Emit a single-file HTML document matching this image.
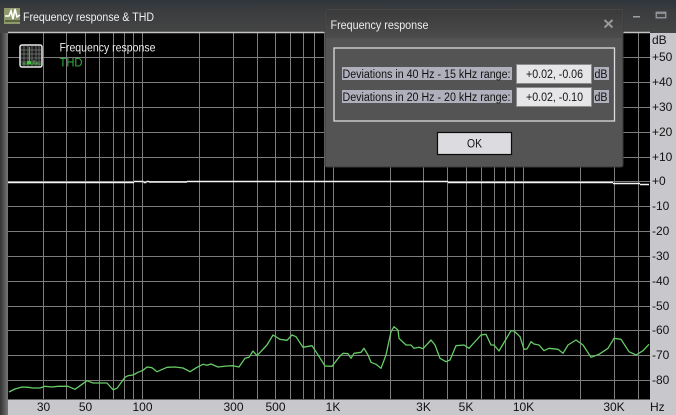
<!DOCTYPE html>
<html><head><meta charset="utf-8"><style>
html,body{margin:0;padding:0;background:#000;width:676px;height:415px;overflow:hidden}
svg{display:block}
text{font-family:"Liberation Sans",sans-serif}
</style></head><body>
<svg xmlns="http://www.w3.org/2000/svg" width="676" height="415" viewBox="0 0 676 415">
<defs>
<linearGradient id="tb" x1="0" y1="0" x2="0" y2="1"><stop offset="0" stop-color="#2f353c"/><stop offset=".3" stop-color="#3a3c3e"/><stop offset="1" stop-color="#454545"/></linearGradient>
<linearGradient id="lb" x1="0" y1="0" x2="1" y2="0"><stop offset="0" stop-color="#333"/><stop offset=".6" stop-color="#5a5a5a"/><stop offset="1" stop-color="#777"/></linearGradient>
<linearGradient id="dt" x1="0" y1="0" x2="0" y2="1"><stop offset="0" stop-color="#3a3a3a"/><stop offset="1" stop-color="#4c4c4c"/></linearGradient>
</defs>
<rect width="676" height="33" fill="url(#tb)"/>
<rect y="33" width="8" height="382" fill="url(#lb)"/>
<rect x="8" y="399" width="668" height="16" fill="#c8c8cc"/>
<rect x="650" y="33" width="26" height="382" fill="#c8c8cc"/>
<rect x="8" y="33" width="642" height="366.500" fill="#000"/>

<g stroke="#7c7c7c" stroke-width="1">
<path d="M43.500 33V399M66.500 33V399M85.500 33V399M99.500 33V399M113.500 33V399M124.500 33V399M133.500 33V399M142.500 33V399M199.500 33V399M233.500 33V399M257.500 33V399M275.500 33V399M290.500 33V399M303.500 33V399M314.500 33V399M324.500 33V399M333.500 33V399M390.500 33V399M423.500 33V399M447.500 33V399M466.500 33V399M481.500 33V399M494.500 33V399M505.500 33V399M514.500 33V399M523.500 33V399M580.500 33V399M614.500 33V399M638.500 33V399"/>
<path d="M8 57.500H650M8 82.500H650M8 107.500H650M8 132.500H650M8 157.500H650M8 181.500H650M8 206.500H650M8 231.500H650M8 256.500H650M8 281.500H650M8 306.500H650M8 330.500H650M8 355.500H650M8 380.500H650"/>
</g>
<path d="M8 32.500H650" stroke="#c4c4c4" stroke-width="1.500"/>
<path d="M8 182.500H134M134 181.500H143.500M143.500 182.500H146.500M146.500 181.500H149M149 182H187M187 181.500H400M400 181.500H448M448 182.500H613M613 183.500H640M640 184.500H649" stroke="#f4f4f4" stroke-width="1.400" fill="none"/>

<polyline fill="none" stroke="#66cc66" stroke-width="1.300" stroke-linejoin="round" points="9,392 15,389 22,387 28,387.300 33,388 40,388 45,386.300 52,387 58,386.300 68,386.300 75,389.300 82,384.300 87,380.700 93,383 107,383 113,389.700 117,388.300 125,377.300 128,375.700 133,375 138,372.300 143,370.300 147,367 152,367.700 157,371.700 167,367.300 175,367 183,368 190,371.700 197,367.300 203,364.300 207,365.300 211,364 218,367 227,366 233,365.700 239,367 245,358.300 249,357.300 253,351 257,355.700 267,345 273,335 280,339.300 287,340.300 292,335 296,336.700 303,347.300 312,345.700 317,353.300 325,366 332,366.300 340,356 343,353.300 348,353.700 351,358.300 354,353.300 361,352.300 364,348.300 368,355 371,362.300 376,364.300 381,368.300 386,355 391,331.700 394,326.700 398,330 399,338.300 406,345 411,345 414,348.300 419,347.300 423,348.700 431,340 435,345 440,358.300 446,361.700 450,360 456,345.700 464,345 469,348.300 481,335 486,334.300 491,345 494,345 499,351 511,330.700 514,331 520,336.700 524,349.300 527,349 531,341.700 534,344 539,345 544,350.700 549,348.300 558,349.300 563,353.300 568,345 576,340 583,345 591,357.300 599,354.300 608,348.300 614,338.300 621,339.300 629,351.700 636,355 643,350.700 649,344.300"/>

<!-- title bar -->
<rect x="4" y="8" width="16" height="16" fill="#8f9a6c"/>
<path d="M5 16H9L11 11L13 19L15 9L17 17L20 15" stroke="#fff" stroke-width="1.600" fill="none"/>
<path d="M5 21H20" stroke="#5c6440" stroke-width="2"/>
<text x="23" y="21" font-size="11.500" fill="#f0f0f0" textLength="131" lengthAdjust="spacingAndGlyphs">Frequency response &amp; THD</text>
<rect x="633" y="16" width="7" height="1.500" fill="#a0a0a0"/>
<rect x="656" y="12" width="10" height="6" fill="#8a8a90" stroke="#99a" stroke-width="0.800"/>
<rect x="657" y="14" width="8" height="3" fill="#444"/>

<!-- legend icon -->
<rect x="20" y="45" width="22" height="22" rx="2" fill="#1c1c1c" stroke="#e8e8e8" stroke-width="1.500"/>
<path d="M24 46V66M28 46V66M32 46V66M36 46V66M39 46V66M21 50H41M21 54H41M21 58H41M21 62H41" stroke="#777" stroke-width=".8"/>
<path d="M29.500 47V64M22 64H41M24 62V64M34 60V64M37 62V64" stroke="#44b044" stroke-width="1.100"/>
<rect x="27" y="61" width="4" height="3" fill="#45c045"/>
<text x="59.500" y="51.500" font-size="11.500" fill="#eee" textLength="96" lengthAdjust="spacingAndGlyphs">Frequency response</text>
<text x="59.500" y="66.500" font-size="11.500" fill="#35b043" textLength="23" lengthAdjust="spacingAndGlyphs">THD</text>

<!-- y axis -->
<g font-size="12" fill="#111">
<text x="652" y="44">dB</text>
<text x="652" y="61">+50</text><text x="652" y="86">+40</text><text x="652" y="111">+30</text><text x="652" y="136">+20</text><text x="652" y="161">+10</text><text x="652" y="185">+0</text>
<text x="652" y="210">-10</text><text x="652" y="235">-20</text><text x="652" y="260">-30</text><text x="652" y="285">-40</text><text x="652" y="310">-50</text><text x="652" y="334">-60</text><text x="652" y="359">-70</text><text x="652" y="384">-80</text>
</g>
<!-- x axis -->
<g font-size="12" fill="#111" text-anchor="middle">
<text x="43.500" y="411">30</text><text x="85.500" y="411">50</text><text x="142.500" y="411">100</text><text x="233.500" y="411">300</text><text x="275.500" y="411">500</text><text x="333" y="411">1K</text><text x="423.500" y="411">3K</text><text x="466" y="411">5K</text><text x="523.500" y="411">10K</text><text x="614" y="411">30K</text>
</g>
<text x="650" y="411" font-size="12" fill="#111">Hz</text>

<!-- dialog -->
<rect x="325" y="9" width="298" height="158" rx="2" fill="#545454" stroke="#3a3a3a"/>
<rect x="326" y="10" width="296" height="28" fill="url(#dt)"/>
<text x="330.500" y="29" font-size="11.500" fill="#eee" textLength="98" lengthAdjust="spacingAndGlyphs">Frequency response</text>
<path d="M604.500 20L612.500 27.500M612.500 20L604.500 27.500" stroke="#999" stroke-width="2"/>
<rect x="334" y="48" width="280.500" height="73" fill="none" stroke="#dcdcdc" stroke-width="1.300"/>
<rect x="342" y="67" width="170" height="13" fill="#b0b0bc"/>
<rect x="342" y="90" width="170" height="13" fill="#b0b0bc"/>
<rect x="594" y="67" width="15" height="13" fill="#b0b0bc"/>
<rect x="594" y="90" width="15" height="13" fill="#b0b0bc"/>
<rect x="516.500" y="64.500" width="75" height="19" fill="#e6e6e8" stroke="#8c8c8c"/>
<rect x="516.500" y="87.500" width="75" height="19" fill="#e6e6e8" stroke="#8c8c8c"/>
<g font-size="11.500" fill="#111">
<text x="342.500" y="78" textLength="168" lengthAdjust="spacingAndGlyphs">Deviations in 40 Hz - 15 kHz range:</text>
<text x="342.500" y="101" textLength="168" lengthAdjust="spacingAndGlyphs">Deviations in 20 Hz - 20 kHz range:</text>
<text x="594.500" y="78" textLength="13" lengthAdjust="spacingAndGlyphs">dB</text>
<text x="594.500" y="101" textLength="13" lengthAdjust="spacingAndGlyphs">dB</text>
<text x="526" y="78" textLength="57" lengthAdjust="spacingAndGlyphs">+0.02, -0.06</text>
<text x="526" y="101" textLength="57" lengthAdjust="spacingAndGlyphs">+0.02, -0.10</text>
</g>
<rect x="437.500" y="132.500" width="74" height="22" fill="#dcdce0" stroke="#0a0a0a" stroke-width="1.200"/>
<text x="474.500" y="147.500" font-size="12" fill="#111" text-anchor="middle" textLength="15" lengthAdjust="spacingAndGlyphs">OK</text>
</svg>
</body></html>
